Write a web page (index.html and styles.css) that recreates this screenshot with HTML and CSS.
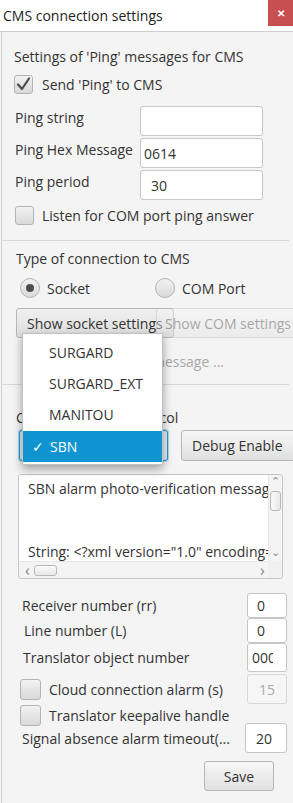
FILE: index.html
```html
<!DOCTYPE html>
<html>
<head>
<meta charset="utf-8">
<link rel="stylesheet" href="styles.css">
</head>
<body>
<div class="window">
  <header class="titlebar">
    <span class="title">CMS connection settings</span>
    <span class="close">&#x2715;</span>
  </header>
  <div class="content">
    <section class="sec sec-ping">
      <div class="heading">Settings of 'Ping' messages for CMS</div>
      <div class="check-row first-check">
        <span class="box"><svg width="19" height="19" viewBox="0 0 19 19"><polyline points="4,9.5 8,14 15,3.5" fill="none" stroke="#4a4a4a" stroke-width="2.2" stroke-linejoin="round" stroke-linecap="round"/></svg></span>
        <span>Send 'Ping' to CMS</span>
      </div>
      <div class="fields">
        <div class="field"><span class="flabel">Ping string</span><span class="input wide"></span></div>
        <div class="field"><span class="flabel">Ping Hex Message</span><span class="input wide hex">0614</span></div>
        <div class="field"><span class="flabel">Ping period</span><span class="input wide">30</span></div>
      </div>
      <div class="check-row listen">
        <span class="box"></span>
        <span>Listen for COM port ping answer</span>
      </div>
    </section>
    <div class="sep"></div>
    <section class="sec sec-type">
      <div class="heading">Type of connection to CMS</div>
      <div class="radios">
        <div class="radio-item socket"><span class="radio on"></span><span>Socket</span></div>
        <div class="radio-item"><span class="radio"></span><span>COM Port</span></div>
      </div>
      <div class="btn-row">
        <span class="btn socket-btn">Show socket settings</span>
        <span class="btn com-btn">Show COM settings</span>
      </div>
      <div class="disabled-line"><span>Send test message ...</span></div>
    </section>
    <div class="sep"></div>
    <section class="sec sec-proto">
      <div class="heading">Communication protocol</div>
      <div class="combo-row">
        <span class="combo"></span>
        <span class="btn debug-btn">Debug Enable</span>
      </div>
      <div class="textarea">
        <div class="ta-text">
          <div>SBN alarm photo-verification message</div>
          <div>&nbsp;</div>
          <div>&nbsp;</div>
          <div>String: &lt;?xml version="1.0" encoding="UTF-8"?&gt;</div>
        </div>
        <div class="vbar">
          <span class="arrow">&#x2303;</span>
          <span class="vthumb"></span>
          <span class="vspace"></span>
          <span class="arrow down">&#x2304;</span>
        </div>
        <div class="hbar">
          <span class="harrow">&#x2039;</span>
          <span class="hthumb"></span>
          <span class="hspace"></span>
          <span class="harrow">&#x203A;</span>
        </div>
        <div class="corner"></div>
      </div>
      <div class="rows">
        <div class="row r1"><span class="rlabel l1">Receiver number (rr)</span><span class="input small">0</span></div>
        <div class="row r2"><span class="rlabel l2">Line number (L)</span><span class="input small">0</span></div>
        <div class="row r3"><span class="rlabel l3">Translator object number</span><span class="input small tight"><span class="clip">0000</span></span></div>
        <div class="row r4"><span class="crow"><span class="box"></span><span>Cloud connection alarm (s)</span></span><span class="input small dis">15</span></div>
        <div class="row r5"><span class="crow"><span class="box"></span><span>Translator keepalive handle</span></span></div>
        <div class="row r6"><span class="rlabel l6">Signal absence alarm timeout(...</span><span class="input small wider">20</span></div>
      </div>
      <div class="save-row"><span class="btn save">Save</span></div>
    </section>
  </div>
  <div class="popup">
    <div class="item">SURGARD</div>
    <div class="item">SURGARD_EXT</div>
    <div class="item">MANITOU</div>
    <div class="item sel"><span class="tick">&#x2713;</span>SBN</div>
  </div>
</div>
</body>
</html>
```
FILE: styles.css
```css
* { box-sizing: border-box; }
html, body { margin: 0; padding: 0; }
body {
  width: 293px;
  height: 803px;
  overflow: hidden;
  background: #f4f4f4;
  font-family: "Open Sans", "Noto Sans", sans-serif;
  font-size: 14px;
  color: #333;
}
.window { position: relative; height: 803px; }
.titlebar {
  height: 32px;
  background: #fff;
  border-bottom: 1px solid #cfcfcf;
  display: flex;
  justify-content: space-between;
  align-items: flex-start;
}
.title { padding: 6px 0 0 3px; font-size: 14px; line-height: 20px; color: #1e1e1e; }
.close {
  width: 25px; height: 26px;
  background: #c84f4f;
  color: #fff;
  display: flex; align-items: center; justify-content: center;
  font-size: 10px; font-weight: bold;
}
.content {
  margin-left: 1px;
  border-left: 1px solid #d2d2d2;
  height: 771px;
}
.sec { display: flex; flex-direction: column; }
.heading { line-height: 20px; height: 20px; white-space: nowrap; }
.sep { height: 1px; background: #d8d8d8; margin-right: 4px; }

.box {
  width: 19px; height: 19px;
  border: 1px solid #b4b4b4;
  border-radius: 3px;
  background: linear-gradient(#f2f2f2, #d9d9d9);
  display: inline-block;
  flex: none;
  position: relative;
}
.box svg { position: absolute; left: -1px; top: -1px; }

/* section 1 */
.sec-ping { height: 208px; padding: 15px 0 0 12px; }
.check-row { display: flex; align-items: center; height: 20px; gap: 9px; white-space: nowrap; }
.first-check { margin-top: 7px; }
.fields { margin-top: 12px; display: flex; flex-direction: column; gap: 2px; }
.field { display: flex; height: 30px; }
.flabel { width: 126px; padding: 2px 0 0 1px; line-height: 20px; white-space: nowrap; }
.input {
  background: #fff;
  border: 1px solid #c6c6c6;
  border-radius: 3px;
  display: flex; align-items: center;
  padding-left: 10px;
  flex: none;
}
.input.wide { width: 123px; height: 30px; padding-left: 10px; }
.input.hex { padding-left: 3px; }
.listen { margin-top: 5px; margin-left: 1px; gap: 8px; }

/* section 2 */
.sec-type { height: 143px; padding: 8px 0 0 14px; }
.radios { display: flex; margin-top: 9px; height: 20px; margin-left: 4px; }
.radio-item { display: flex; align-items: center; gap: 7px; }
.radio-item.socket { width: 135px; }
.radio {
  width: 20px; height: 20px; border-radius: 50%;
  border: 1px solid #b4b4b4;
  background: linear-gradient(#f2f2f2, #d9d9d9);
  display: flex; align-items: center; justify-content: center;
}
.radio.on::after { content: ""; width: 8px; height: 8px; border-radius: 50%; background: #4d4d4d; }
.btn-row { display: flex; margin-top: 10px; height: 30px; }
.btn {
  display: flex; align-items: center;
  border: 1px solid #b6b6b6;
  border-radius: 3px;
  background: linear-gradient(#f7f7f7, #e0e0e0);
  white-space: nowrap;
  flex: none;
}
.socket-btn { width: 158px; padding-left: 10px; background: linear-gradient(#f0f0f0, #dedede); }
.com-btn { width: 150px; margin-left: -18px; padding-left: 8px; opacity: 0.4; position: relative; z-index: 1; }
.disabled-line { margin-top: 14px; width: 208px; text-align: right; line-height: 20px; color: #a8a8a8; white-space: nowrap; }

/* section 3 */
.sec-proto { padding: 23px 0 0 14px; }
.combo-row { display: flex; margin-top: 2px; height: 31px; }
.combo { flex: none; width: 149px; margin-left: 3px; border: 1px solid #1b9ad6; border-radius: 3px; background: #e8e8e8; box-shadow: 0 0 0 1px #a7d8ef; }
.debug-btn { margin-left: 13px; width: 120px; padding-left: 10px; }
.textarea {
  margin-top: 13px; margin-left: 2px;
  width: 265px; height: 105px;
  border: 1px solid #c4c4c4; border-radius: 3px;
  background: #f2f2f2;
  display: grid;
  grid-template-columns: 1fr 14px;
  grid-template-rows: 1fr 17px;
  overflow: hidden;
}
.ta-text {
  background: #fff;
  padding: 3px 0 0 9px;
  line-height: 21px;
  white-space: nowrap;
  overflow: hidden;
}
.vbar { background: #f4f4f4; display: flex; flex-direction: column; align-items: center; border-left: 1px solid #e6e6e6; }
.arrow { font-size: 11px; line-height: 12px; color: #888; height: 14px; }
.arrow.down { line-height: 10px; }
.vthumb { width: 11px; height: 20px; margin-top: 2px; border: 1px solid #b8b8b8; border-radius: 3px; background: linear-gradient(90deg, #fafafa, #e8e8e8); }
.vspace { flex: 1; }
.hbar { background: #f4f4f4; display: flex; align-items: center; padding-left: 6px; border-top: 1px solid #e6e6e6; }
.harrow { font-size: 16px; color: #888; line-height: 14px; width: 8px; }
.hthumb { width: 23px; height: 11px; margin-left: 1px; border: 1px solid #b8b8b8; border-radius: 3px; background: linear-gradient(#fafafa, #e8e8e8); }
.hspace { flex: 1; }
.corner { background: #f0f0f0; }

.rows { margin-top: 14px; display: flex; flex-direction: column; width: 271px; }
.row { display: flex; justify-content: space-between; align-items: center; }
.r1, .r2 { height: 25px; }
.r3 { height: 29px; }
.r4 { height: 30px; margin-top: 2px; }
.r5 { height: 20px; margin-top: 1px; }
.r6 { height: 30px; margin-top: -2px; }
.rlabel { white-space: nowrap; }
.l1 { margin-left: 6px; }
.l2 { margin-left: 8px; }
.l3 { margin-left: 7px; }
.l6 { margin-left: 6px; }
.input.small { width: 40px; height: 100%; padding-left: 9px; }
.input.tight { padding-left: 4px; white-space: nowrap; }
.clip { display: block; width: 21px; overflow: hidden; }
.input.dis { background: #f6f6f6; color: #aaa; padding-left: 11px; border-color: #d8d8d8; }
.input.wider { width: 42px; padding-left: 10px; }
.crow { display: flex; align-items: center; gap: 8px; margin-left: 4px; white-space: nowrap; }
.crow .box { width: 21px; height: 21px; }
.save-row { display: flex; margin-top: 8px; }
.save { width: 70px; height: 30px; margin-left: 188px; justify-content: center; }

/* popup overlay */
.popup {
  position: absolute;
  left: 22px; top: 333px;
  width: 141px; height: 132px;
  background: #fff;
  border: 1px solid #c2c2c2;
  box-shadow: 0 4px 9px rgba(0,0,0,0.35);
  padding-top: 3px;
  display: flex; flex-direction: column;
  z-index: 5;
}
.item { height: 31px; line-height: 31px; padding-left: 26px; white-space: nowrap; }
.item.sel { background: #0f94d0; color: #fff; padding-left: 9px; margin-top: 1px; }
.tick { display: inline-block; width: 18px; }
```
